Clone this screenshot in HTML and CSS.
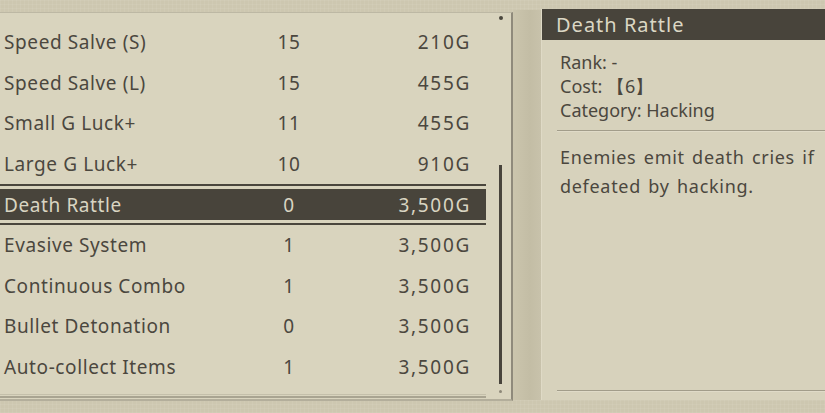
FILE: index.html
```html
<!DOCTYPE html>
<html>
<head>
<meta charset="utf-8">
<link rel="stylesheet" href="styles.css">
</head>
<body>
<div class="screen">
  <div class="list-panel">
    <div class="rows">
      <div class="row"><span class="name">Speed Salve (S)</span><span class="count">15</span><span class="price">210G</span></div>
      <div class="row"><span class="name">Speed Salve (L)</span><span class="count">15</span><span class="price">455G</span></div>
      <div class="row"><span class="name">Small G Luck+</span><span class="count">11</span><span class="price">455G</span></div>
      <div class="row"><span class="name">Large G Luck+</span><span class="count">10</span><span class="price">910G</span></div>
      <div class="row selected"><span class="name">Death Rattle</span><span class="count">0</span><span class="price">3,500G</span></div>
      <div class="row"><span class="name">Evasive System</span><span class="count">1</span><span class="price">3,500G</span></div>
      <div class="row"><span class="name">Continuous Combo</span><span class="count">1</span><span class="price">3,500G</span></div>
      <div class="row"><span class="name">Bullet Detonation</span><span class="count">0</span><span class="price">3,500G</span></div>
      <div class="row"><span class="name">Auto-collect Items</span><span class="count">1</span><span class="price">3,500G</span></div>
    </div>
    <div class="list-foot"></div>
    <div class="scrollbar">
      <span class="sb-dot top"></span>
      <span class="sb-thumb"></span>
      <span class="sb-dot bottom"></span>
    </div>
  </div>
  <div class="gutter"></div>
  <div class="detail-panel">
    <div class="detail-title">Death Rattle</div>
    <div class="stats">
      <div>Rank: -</div>
      <div>Cost: 【6】</div>
      <div>Category: Hacking</div>
    </div>
    <div class="rule"></div>
    <p class="desc">Enemies emit death cries if defeated by hacking.</p>
    <div class="rule bottom-rule"></div>
  </div>
</div>
</body>
</html>
```
FILE: styles.css
```css
html, body {
  margin: 0;
  padding: 0;
}
body {
  width: 825px;
  height: 413px;
  overflow: hidden;
  background-color: #cdc7b0;
  background-image:
    linear-gradient(rgba(255,255,255,0.05) 1px, transparent 1px),
    linear-gradient(90deg, rgba(255,255,255,0.05) 1px, transparent 1px);
  background-size: 4px 4px;
  font-family: "Noto Sans", "DejaVu Sans", sans-serif;
  color: #4b473e;
}
.screen {
  display: flex;
  align-items: flex-start;
  height: 413px;
}
.list-panel {
  position: relative;
  margin-top: 12px;
  width: 512px;
  height: 386px;
  background: #d9d4be;
  border-top: 1px solid #bdb8a4;
  border-right: 2px solid #8f8a7b;
  border-bottom: 2px solid #b3ae9b;
  box-sizing: content-box;
  display: flex;
  flex-direction: column;
}
.rows {
  padding-top: 9px;
  width: 486px;
}
.row {
  display: grid;
  grid-template-columns: 240px 98px 1fr;
  align-items: center;
  height: 40.6px;
  font-size: 19px;
  letter-spacing: 0.6px;
  box-sizing: border-box;
}
.row .name {
  padding-left: 4px;
  white-space: nowrap;
}
.row .count {
  text-align: center;
}
.row .price {
  text-align: right;
  padding-right: 15px;
  letter-spacing: 1.7px;
}
.row.selected {
  border-top: 2px solid #4a463d;
  border-bottom: 2px solid #4a463d;
  background: linear-gradient(transparent 3px, #48443b 3px, #48443b calc(100% - 3px), transparent calc(100% - 3px));
  color: #d9d5c2;
}
.list-foot {
  margin-top: auto;
  margin-bottom: 1px;
  width: 486px;
  height: 4px;
  border-top: 1px solid #c4bfaa;
  border-bottom: 2px solid #a9a491;
  box-sizing: border-box;
}
.scrollbar {
  position: absolute;
  left: 499px;
  top: 0;
  bottom: 0;
  width: 4px;
}
.sb-dot {
  position: absolute;
  left: 0;
  width: 4px;
  height: 4px;
  border-radius: 50%;
  background: #4a463d;
}
.sb-dot.top { top: 3px; }
.sb-dot.bottom { top: 377px; width: 3px; height: 3px; background: #8d8878; }
.sb-thumb {
  position: absolute;
  left: 0;
  top: 152px;
  width: 3px;
  height: 219px;
  background: #48443c;
}
.gutter {
  width: 28px;
  height: 390px;
  margin-top: 10px;
  background: linear-gradient(90deg, #cbc5ad, #c3bda5 60%, #c8c2ab);
}
.detail-panel {
  flex: 1;
  margin-top: 9px;
  height: 391px;
  background: #d7d2bc;
  border-left: 1px solid #dfdac6;
  display: flex;
  flex-direction: column;
}
.detail-title {
  height: 31px;
  background: #48443b;
  color: #dbd7c4;
  font-size: 20px;
  letter-spacing: 1px;
  line-height: 31px;
  padding-left: 14px;
}
.stats {
  padding-top: 10px;
  padding-left: 18px;
  font-size: 18px;
  line-height: 24px;
}
.rule {
  margin: 8px 0 0 15px;
  height: 0;
  border-top: 1px solid #a29d8a;
  border-bottom: 1px solid #e0dbc8;
}
.desc {
  margin: 11px 0 0 18px;
  font-size: 18px;
  line-height: 29px;
  letter-spacing: 0.7px;
  word-spacing: 2px;
  width: 265px;
}
.bottom-rule {
  margin-top: auto;
  margin-bottom: 8px;
}
```
